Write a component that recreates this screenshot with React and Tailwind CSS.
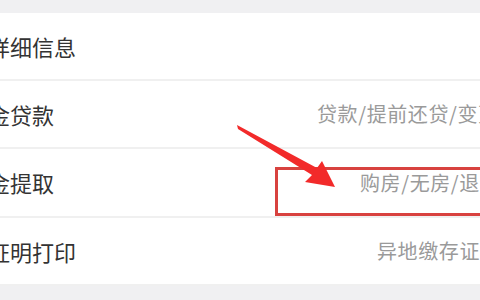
import React from "react";

const rows = [
  { label: "详细信息", value: "", h: "h-[68px]", w: "w-[300px]" },
  { label: "金贷款", value: "贷款/提前还贷/变更", h: "h-[68px]", w: "w-[329px]" },
  { label: "金提取", value: "购房/无房/退休", h: "h-[69px]", w: "w-[372px]" },
  { label: "证明打印", value: "异地缴存证明", h: "h-[68px]", w: "w-[389px]" },
];

function App() {
  return (
    <div
      className="relative w-[480px] h-[300px] overflow-hidden bg-[#f0f0f2]"
      style={{ fontFamily: '"Noto Sans CJK SC", "Noto Sans", sans-serif' }}
    >
      <div className="h-[13px]" />
      <div className="bg-white">
        {rows.map((row) => (
          <div
            key={row.label}
            className={`${row.h} flex items-center whitespace-nowrap border-b-2 border-[#f0f0f0] -ml-[12px]`}
          >
            <span className={`${row.w} shrink-0 text-[22px] text-[#333333]`}>{row.label}</span>
            <span className="text-[20px] tracking-[0.6px] text-[#9a9a9a]">{row.value}</span>
          </div>
        ))}
      </div>

      {/* annotation box */}
      <div className="absolute left-[275px] top-[167px] w-[230px] h-[49px] border-[3px] border-[#d8423f]" />

      {/* annotation arrow */}
      <svg className="absolute inset-0" width="480" height="300" viewBox="0 0 480 300">
        <polygon
          points="237,125 317,168 322,161 335,187 305,182 312,175 238,129"
          fill="#f22a2a"
        />
      </svg>
    </div>
  );
}

export default App;
